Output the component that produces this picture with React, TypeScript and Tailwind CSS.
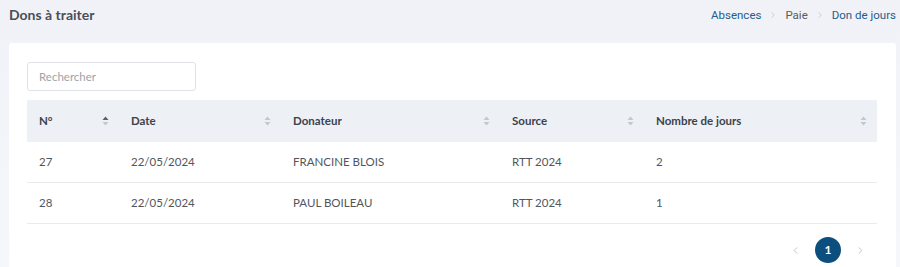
import { ChevronLeft, ChevronRight } from "lucide-react";

type Don = { id: number; date: string; donateur: string; source: string; jours: number };

const dons: Don[] = [
  { id: 27, date: "22/05/2024", donateur: "FRANCINE BLOIS", source: "RTT 2024", jours: 2 },
  { id: 28, date: "22/05/2024", donateur: "PAUL BOILEAU", source: "RTT 2024", jours: 1 },
];

const columns = [
  { label: "N°", width: "w-[92px]", active: true },
  { label: "Date", width: "w-[162px]", active: false },
  { label: "Donateur", width: "w-[219px]", active: false },
  { label: "Source", width: "w-[144px]", active: false },
  { label: "Nombre de jours", width: "", active: false },
];

const SortIcon = ({ active }: { active: boolean }) => (
  <svg width="7" height="10" viewBox="0 0 7 10" className="shrink-0">
    <path d="M3.5 0.5 L6.5 4 H0.5 Z" fill={active ? "#5a606b" : "#c3c8d0"} />
    <path d="M3.5 9.5 L6.5 6 H0.5 Z" fill="#c3c8d0" />
  </svg>
);

export default function App() {
  return (
    <div className="h-[267px] w-[900px] overflow-hidden bg-[linear-gradient(180deg,#f1f2f8_0%,#f6f7fa_100%)] font-['Lato',sans-serif]">
      <div className="flex h-[43px] items-start justify-between pl-[9px] pr-[4px] pt-[5px]">
        <h1 className="text-[14px] font-bold leading-[19px] text-[#4a4f57]">Dons à traiter</h1>
        <nav className="flex items-center gap-[7px] pt-[1px] font-['Roboto',sans-serif] text-[11.5px] leading-[18px]">
          <span className="text-[#245d8a]">Absences</span>
          <ChevronRight size={10} className="text-[#c4c8ce]" />
          <span className="text-[#555b63]">Paie</span>
          <ChevronRight size={10} className="text-[#c4c8ce]" />
          <span className="text-[#245d8a]">Don de jours</span>
        </nav>
      </div>

      <div className="ml-[9px] mr-[4px] h-[240px] rounded-[3px] bg-white px-[18px] pt-[19px]">
        <div className="flex h-[29px] w-[169px] items-center rounded-[3px] border border-[#dfe2e6] px-[11px] text-[11.5px] text-[#9ea3a9]">
          Rechercher
        </div>

        <div className="mt-[9px] w-[850px]">
          <div className="flex h-[42px] items-center bg-[#edf0f5] text-[11.5px] font-bold text-[#3d424a]">
            {columns.map((col) => (
              <div
                key={col.label}
                className={`flex items-center justify-between pl-[12px] pr-[10px] ${col.width || "flex-1"}`}
              >
                <span>{col.label}</span>
                <SortIcon active={col.active} />
              </div>
            ))}
          </div>
          {dons.map((d) => (
            <div
              key={d.id}
              className="flex h-[41px] items-center border-b border-[#e8eaee] text-[11.5px] text-[#51565e]"
            >
              <div className="w-[92px] pl-[12px]">{d.id}</div>
              <div className="w-[162px] pl-[12px]">{d.date}</div>
              <div className="w-[219px] pl-[12px]">{d.donateur}</div>
              <div className="w-[144px] pl-[12px]">{d.source}</div>
              <div className="flex-1 pl-[12px]">{d.jours}</div>
            </div>
          ))}

          <div className="mt-[13px] flex items-center justify-end gap-[14px] pr-[11px]">
            <ChevronLeft size={11} className="text-[#b8bdc4]" />
            <div className="flex h-[26px] w-[26px] items-center justify-center rounded-full bg-[#0c4e7d] text-[12px] font-bold text-white">
              1
            </div>
            <ChevronRight size={11} className="text-[#b8bdc4]" />
          </div>
        </div>
      </div>
    </div>
  );
}
